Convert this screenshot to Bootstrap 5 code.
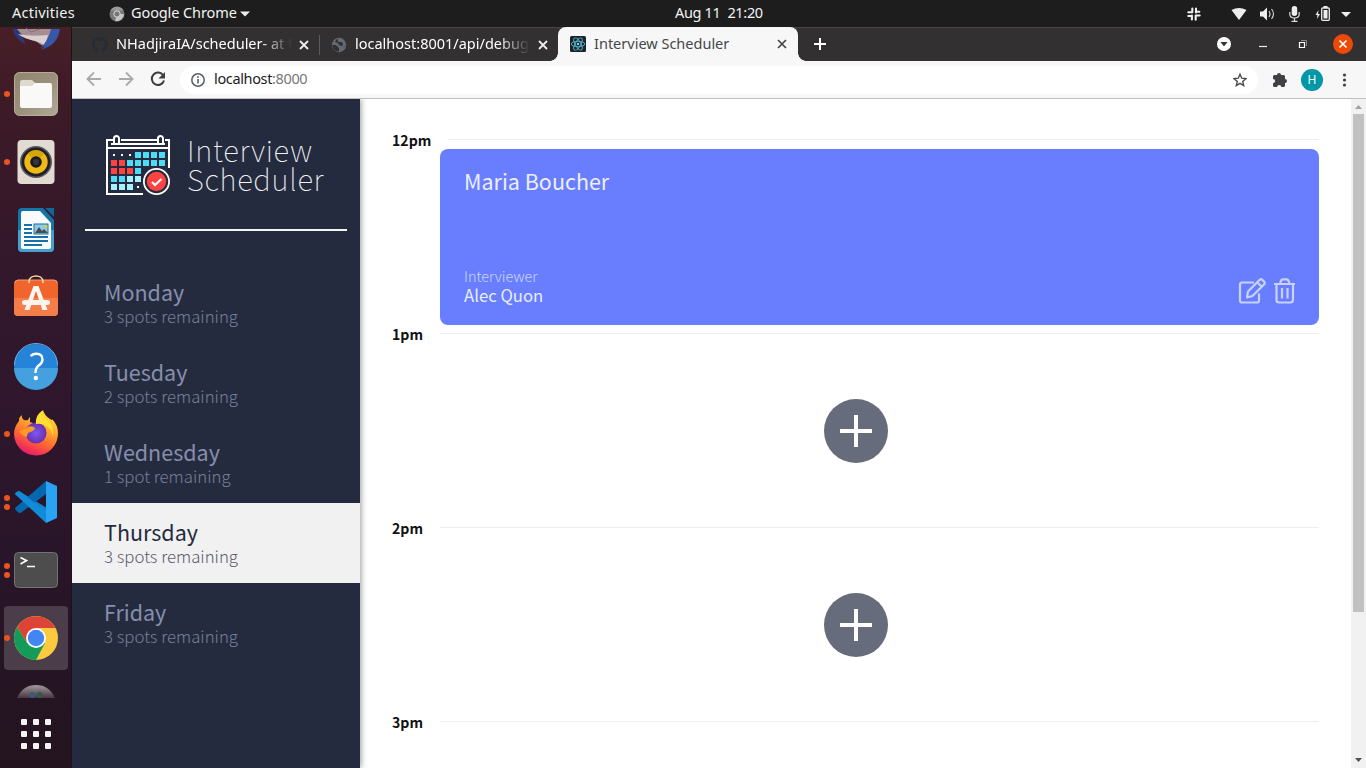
<!DOCTYPE html>
<html lang="en">
<head>
<meta charset="utf-8">
<title>Interview Scheduler</title>
<link href="https://cdn.jsdelivr.net/npm/bootstrap@5.3.0/dist/css/bootstrap.min.css" rel="stylesheet">
<style>
html,body{height:768px;overflow:hidden}
body{font-family:"Noto Sans","Open Sans",sans-serif;font-size:14.5px;line-height:20px;color:#fff;width:1366px}
svg{display:block;flex:none}
.t{white-space:nowrap}
.topbar{height:27px;background:#1d1d1d;color:#f2f2f2}
.topbar .t,.tabstrip .t,.toolbar .t{padding-bottom:4px}
.dock{width:72px;background:linear-gradient(#471f27 0,#3d1a27 80px,#34182b 220px,#2e162c 400px,#281528 550px,#23141f 741px);box-shadow:inset -1px 0 #1c1019}
.slot{height:68px}
.slot-top{height:33px}
.slot-end{height:26px}
.dots{left:4px;top:0;bottom:0;gap:3px}
.dots i{width:6px;height:6px;border-radius:50%;background:#e95420}
.active-app{width:64px;height:64px;background:#4b3d49;border-radius:4px}
.apps{display:grid;grid-template-columns:repeat(3,6px);gap:6px;margin:21px auto 0;width:30px}
.apps i{height:6px;border-radius:1px;background:#f4f2f2}
.tabstrip{height:34px;background:#333031;border-top:1px solid #494647}
.tab-a{width:248px}
.tab-b{width:238px}
.tab-on{width:240px;height:34px;background:#f7f7f7;border-radius:8px 8px 0 0;color:#45484b;margin-top:-1px}
.tab-on:before,.tab-on:after{content:"";position:absolute;bottom:0;width:8px;height:8px}
.tab-on:before{left:-8px;background:radial-gradient(circle at 0 0,transparent 7.5px,#f7f7f7 8px)}
.tab-on:after{right:-8px;background:radial-gradient(circle at 100% 0,transparent 7.5px,#f7f7f7 8px)}
.fade-end{-webkit-mask-image:linear-gradient(90deg,#000 calc(100% - 32px),transparent);overflow:hidden}
.toolbar{height:38px;background:#f7f7f7;border-bottom:1px solid #bfbfbf}
.omni{height:28px;width:1078px;border-radius:14px;background:#fff;color:#1c1c1e}
.avatar-h{width:22px;height:22px;border-radius:50%;background:#0097a7;color:#fff;font-size:12px;line-height:12px}
.ssp{font-family:"Noto Sans CJK SC",sans-serif}
.side{width:288px;background:#252b3e;box-shadow:1px 0 6px rgba(0,0,0,.4);z-index:1}
.brand{height:130px;padding:36px 0 0 34px}
.brand-name{font-weight:100;font-size:29.4px;line-height:29px;letter-spacing:.7px;color:#f1f3f7;margin:0 0 0 17px}
.rule{height:2px;width:262px;margin:0 13px 32px;background:#f5f5f7}
.day{height:80px;padding:15px 32px;color:#858fad}
.day-name{font-size:21.5px;line-height:28px}
.day-sub{font-size:16.8px;line-height:20px;font-weight:300;color:#76809b}
.day.on{background:#f1f1f1;color:#252b3e}
.day.on .day-sub{color:#5a5a70}
.main-area{width:991px;background:#fff;padding:32px 32px 0}
.hour{height:194px}
.hour-head{height:18px;line-height:18px;color:#111}
.hour-name{width:48px;font-weight:700;font-size:14.1px}
.hour-line{height:1px;background:#eee;margin-top:8px}
.appt{height:176px;background:#687eff;border-radius:8px;margin:0 0 0 48px;padding:17px 24px 20px}
.who{font-size:21.5px;line-height:30px;color:#eceffa}
.lab{font-size:14.4px;line-height:18px;font-weight:300;color:#ccd5ff}
.int{font-size:16.7px;line-height:20px;color:#e9edff}
.appt svg{margin:0 -1px 1px 0}
.plus{width:64px;height:64px;border-radius:50%;background:#666c7b;margin-top:56px}
.sbar{width:15px;background:#f1f1f1}
.thumb{width:11px;height:498px;background:#c1c1c1}
</style>
</head>
<body class="d-flex flex-column">
<header class="topbar d-flex align-items-center flex-shrink-0 px-0">
  <div class="t" style="width:109px;padding-left:12px;letter-spacing:.25px">Activities</div>
  <svg width="16" height="16" viewBox="0 0 16 16"><circle cx="8" cy="8" r="7.5" fill="#777"/><path d="M8 8h7a7.5 7.5 0 0 1-9 7z" fill="#c4c4c4"/><path d="M1.500 4.500A7.500 7.500 0 0 1 14.500 4.500H8z" fill="#999"/><circle cx="8" cy="8" r="3.200" fill="#777" stroke="#ddd"/></svg>
  <div class="t" style="margin-left:6px;width:109px;letter-spacing:-.1px">Google Chrome</div>
  <svg width="10" height="6"><path d="M0 .5h10L5 5.500z" fill="#eee"/></svg>
  <div class="t" style="margin-left:425px;width:512px;white-space:pre;letter-spacing:-.33px">Aug 11  21:20</div>
  <svg width="179" height="26" viewBox="1187 0 179 26" fill="#eee">
    <g stroke="#f0f0f0" stroke-width="2.100" stroke-linecap="round" fill="none"><path d="M1192.300 7.500v3.300M1188.300 11.300h4M1196 7.500v4M1196.500 10.800h2.800M1195.700 15v3.700M1195.700 14.500h4M1191.900 14.500v4M1188.300 15h3"/></g>
    <path d="M1231.500 9q7.500-4 15 0l-7.500 10z"/>
    <path d="M1260 10.500h3l4-4v13l-4-4h-3z"/><path d="M1269 10q2 3 0 6M1271.500 8q4 5 0 10" fill="none" stroke="#ccc" stroke-width="1.200"/>
    <rect x="1291.700" y="5" width="5.500" height="10" rx="2.700"/><path d="M1289.800 11v2q0 4 4.700 4t4.700-4v-2M1294.500 17v3M1291.500 20.300h6" fill="none" stroke="#ddd" stroke-width="1.200"/>
    <path d="M1318.500 9l-3 5h2l-.5 4 3-5h-2z"/><rect x="1321.700" y="7" width="7.600" height="12.300" rx="1" fill="none" stroke="#eee" stroke-width="1.300"/><path d="M1323.500 9h4v8.500h-4zM1323.500 5h4v2h-4z"/>
    <path d="M1341 11h10l-5 5z"/>
  </svg>
</header>
<div class="d-flex flex-grow-1 overflow-hidden">
<aside class="dock d-flex flex-column flex-shrink-0">
  <div class="slot-top flex-shrink-0"><svg width="72" height="33" viewBox="0 27 72 33"><path d="M12.500 29h7l6 15q-10-4-13-15z" fill="#2e377b"/><path d="M17 29h35l-7 17q-5-1-8-4-14-4-20-13z" fill="#a58f95"/><path d="M18 34q12 3 30 1l-3 10-9-4q-12-2-18-7z" fill="#dccfd1"/><path d="M51 29h9q-2 12-10 17l-9 4 4-4-5 2q8-6 11-19z" fill="#3757a8"/><path d="M26 28l5 4 9-3" stroke="#84727b" fill="none"/></svg></div>
  <div class="slot position-relative"><span class="dots position-absolute d-flex flex-column justify-content-center"><i></i></span><svg class="mx-auto" width="72" height="68" viewBox="0 60 72 68"><defs><linearGradient id="fg" x2="1" y2="1"><stop stop-color="#8f8570"/><stop offset=".5" stop-color="#9a907c"/><stop offset="1" stop-color="#b1a997"/></linearGradient></defs><rect x="14.500" y="72.500" width="43" height="43" rx="5" fill="url(#fg)" stroke="#b5ad9a"/><path d="M20 82q0-2 2-2h10l3 3v6H20z" fill="#dfd9cd"/><path d="M20 86h12l3-3h15q2 0 2 2v21q0 2-2 2H22q-2 0-2-2z" fill="#f9f9f8"/></svg></div>
  <div class="slot position-relative"><span class="dots position-absolute d-flex flex-column justify-content-center"><i></i></span><svg width="72" height="68" viewBox="0 128 72 68"><rect x="17.500" y="140" width="37" height="44" rx="4" fill="#e1dbd1"/><circle cx="36" cy="162" r="16" fill="#5c5962"/><circle cx="36" cy="162" r="14.500" fill="#202029"/><circle cx="36" cy="162" r="11.700" fill="#f1b916"/><path d="M36 162l-8.300-8.300a11.700 11.700 0 0 1 16.600 0z" fill="#d9a40a"/><circle cx="36" cy="162" r="5.800" fill="#1a1b20"/><circle cx="36" cy="162" r="3" fill="#35363b"/></svg></div>
  <div class="slot"><svg width="72" height="68" viewBox="0 196 72 68"><path d="M22 208h21l11 12v28q0 4-4 4H22q-4 0-4-4v-36q0-4 4-4z" fill="#1675a8"/><path d="M18 230h36v18q0 4-4 4H22q-4 0-4-4z" fill="#459fd0"/><path d="M45 208h9v9z" fill="#10659b"/><path d="M23 211h17l11 12v24q0 2-2 2H23q-2 0-2-2v-34q0-2 2-2z" fill="#f9fafb"/><path d="M24 225h8M24 229h8M24 233h8M24 237h24M24 241h24M24 245h18" stroke="#176fa8" stroke-width="1.800"/><rect x="34" y="224" width="14" height="10" fill="#8fcbe8" stroke="#176fa8"/><path d="M35 233l4-6 3 4 2-2 4 4z" fill="#4c4b47"/><circle cx="46" cy="226.500" r="1.500" fill="#f5c518"/></svg></div>
  <div class="slot"><svg width="72" height="68" viewBox="0 264 72 68"><rect x="14" y="280" width="44" height="36" rx="4" fill="#f1642b"/><path d="M14 298h44v14q0 4-4 4H18q-4 0-4-4z" fill="#f37e49"/><path d="M15 283q0-3 3-3h36q3 0 3 3" stroke="#f49d74" fill="none"/><path d="M29 283v-1c0-8 14-8 14 0v1" fill="none" stroke="#f0d7a5" stroke-width="1.700"/><path d="M33.500 286h5l9 24h-5L36 291l-6.500 19h-5z" fill="#fff7f1"/><rect x="22" y="300" width="28" height="5" rx="2.500" fill="#fff3ec"/></svg></div>
  <div class="slot"><svg width="72" height="68" viewBox="0 332 72 68"><circle cx="36" cy="366" r="22" fill="#2584d7"/><path d="M14 368h44a22 22 0 0 1-44 0z" fill="#45a0df"/><path d="M14.500 365a21.500 21.500 0 0 1 43 0" fill="none" stroke="#69aee8"/><path d="M30.500 356q3-2.300 6-2.200 6 .3 6 5.600 0 3.500-3.700 6-3.300 2.600-3.300 7v.5" fill="none" stroke="#fff" stroke-width="2.400"/><circle cx="35.800" cy="378" r="2.200" fill="#fff"/></svg></div>
  <div class="slot position-relative"><span class="dots position-absolute d-flex flex-column justify-content-center"><i></i></span><svg width="72" height="68" viewBox="0 400 72 68"><defs><linearGradient id="ff" x1=".8" y1="0" x2=".35" y2="1"><stop stop-color="#ffe83c"/><stop offset=".35" stop-color="#ffae2b"/><stop offset=".7" stop-color="#ff5f35"/><stop offset="1" stop-color="#e8186c"/></linearGradient><radialGradient id="fp"><stop stop-color="#7a59f4"/><stop offset="1" stop-color="#6b2fae"/></radialGradient></defs><path d="M14 434q0-7 5-13 0-4 2.500-6 .5 4 2.500 5 2 .500 4 0 1-2 2-3v5l6 2q2-10 7-14 1 5 7 9 3 2 2 0 6 6 6 14a22 22 0 1 1-44 1z" fill="url(#ff)"/><circle cx="36" cy="433" r="10.500" fill="url(#fp)"/><path d="M19 431q6-1 9-4 4-2 7 1-1 3-5 4-3 1-3 5-5-1-8-6z" fill="#ff9b24"/><path d="M36 424q-1-9 6-13 0 5 7 10 5 5 4 15-2-8-7-10-4-3-10-2z" fill="#ffdf35"/></svg></div>
  <div class="slot position-relative"><span class="dots position-absolute d-flex flex-column justify-content-center"><i></i><i></i></span><svg width="72" height="68" viewBox="0 468 72 68"><path d="M19 491q-4 1-4 3l32 28V508z" fill="#0b83d2"/><path d="M46 481L15 508q0 2 4 5 2 0 3-1l24-18z" fill="#0567ad"/><path d="M19 491l-4 3 31 29v-12z" fill="#128bd8"/><path d="M46 481l11 5v32l-11 5z" fill="#29a4f2"/></svg></div>
  <div class="slot position-relative"><span class="dots position-absolute d-flex flex-column justify-content-center"><i></i><i></i></span><svg width="72" height="68" viewBox="0 536 72 68"><rect x="14.500" y="552.500" width="43" height="35" rx="4" fill="#4d4d4d" stroke="#747274"/><path d="M20.500 557.500l6 3-6 3.500" fill="none" stroke="#fff" stroke-width="1.700"/><path d="M27 566.500h8" stroke="#fff" stroke-width="1.500"/></svg></div>
  <div class="slot position-relative d-flex align-items-center justify-content-center"><div class="active-app d-flex align-items-center justify-content-center"><svg width="46" height="46" viewBox="-23 -23 46 46"><circle r="22" fill="#fbca3e"/><path d="M-19-11A22 22 0 0 1 19.500-10H0L-9 5z" fill="#db4437"/><path d="M-19-11A22 22 0 0 0 0 22L9 5-9 5z" fill="#159b59"/><circle r="10" fill="#fff"/><circle r="8.200" fill="#4285f4"/></svg></div><span class="dots position-absolute d-flex flex-column justify-content-center"><i></i></span></div>
  <div class="slot-end flex-shrink-0"><svg width="72" height="26" viewBox="0 672 72 26"><defs><linearGradient id="tr" x2="0" y2="1"><stop stop-color="#a19aa0"/><stop offset="1" stop-color="#49363f"/></linearGradient></defs><path d="M17 698q6-13 19-13t19 13z" fill="url(#tr)"/><circle cx="32.500" cy="695" r="3" fill="#3b5a76"/><circle cx="39.500" cy="695" r="3" fill="#34584e"/></svg></div>
  <div class="apps"><i></i><i></i><i></i><i></i><i></i><i></i><i></i><i></i><i></i></div>
</aside>
<div class="d-flex flex-column flex-grow-1">
  <div class="tabstrip d-flex flex-shrink-0">
    <div class="tab-a d-flex align-items-center" style="padding-left:20px">
      <svg width="16" height="16" viewBox="0 0 16 16"><path fill="#252c35" d="M8 0C3.580 0 0 3.580 0 8c0 3.540 2.290 6.530 5.470 7.590.4.070.55-.17.55-.38v-1.490c-2.010.37-2.530-.49-2.690-.94-.36-.92-.85-1.230-1.130-1.380-.28-.15-.68-.52-.01-.53.63-.01 1.080.58 1.230.82.72 1.210 1.870.87 2.330.66.07-.52.28-.87.510-1.070-1.780-.2-3.640-.89-3.640-3.950 0-.87.310-1.590.82-2.150-.08-.2-.36-1.020.08-2.120 0 0 .67-.21 2.200.82a7.500 7.500 0 0 1 4 0c1.530-1.040 2.200-.82 2.200-.82.44 1.100.16 1.920.08 2.120.51.56.82 1.270.82 2.150 0 3.070-1.870 3.750-3.650 3.950.29.25.54.73.54 1.480v2.200c0 .21.150.46.55.38A8 8 0 0 0 16 8c0-4.420-3.580-8-8-8z"/></svg>
      <div class="t fade-end" style="width:176px;margin-left:8px">NHadjiraIA/scheduler- at f</div>
      <svg width="10" height="10" viewBox="0 0 10 10" style="margin-left:7px"><path d="M1 1l8 8M9 1L1 9" stroke="#eee" stroke-width="1.800"/></svg>
      <div class="ms-auto" style="width:1px;height:20px;background:#5e5b5c"></div>
    </div>
    <div class="tab-b d-flex align-items-center" style="padding-left:11px">
      <svg width="16" height="16" viewBox="0 0 16 16"><circle cx="8" cy="8" r="7.200" fill="#656970"/><path d="M1 8h4l3 3v3.500q-6 0-7-6.500zM7 1.500q-1 3 1 3.500h3q2 3 0 4l-3-1-1-2-3-1q1-3 3-3.500zM12 11q2-1 3-3" fill="#333031"/></svg>
      <div class="t fade-end" style="width:175px;margin-left:8px">localhost:8001/api/debug</div>
      <svg width="10" height="10" viewBox="0 0 10 10" style="margin-left:8px"><path d="M1 1l8 8M9 1L1 9" stroke="#eee" stroke-width="1.800"/></svg>
    </div>
    <div class="tab-on position-relative d-flex align-items-center" style="padding-left:12px">
      <svg width="16" height="16" viewBox="-8 -8 16 16"><rect x="-8" y="-8" width="16" height="16" rx="1.500" fill="#20232a"/><g fill="none" stroke="#53b8d0" stroke-width=".9"><ellipse rx="6.800" ry="2.700"/><ellipse rx="6.800" ry="2.700" transform="rotate(60)"/><ellipse rx="6.800" ry="2.700" transform="rotate(120)"/></g><circle r="1.200" fill="#61dafb"/></svg>
      <div class="t" style="width:175px;margin-left:8px;padding-bottom:3px">Interview Scheduler</div>
      <svg width="10" height="10" viewBox="0 0 10 10" style="margin-left:8px"><path d="M1 1l8 8M9 1L1 9" stroke="#444" stroke-width="1.700"/></svg>
    </div>
    <svg width="568" height="33" viewBox="798 28 568 33"><path d="M820 38v12M814 44h12" stroke="#fff" stroke-width="2"/><circle cx="1224" cy="44" r="7" fill="#fff"/><path d="M1220.500 42h7l-3.500 4.500z" fill="#333"/><path d="M1259 46.500h8" stroke="#eee" stroke-width="1.200"/><path d="M1299.500 42.500h5v5h-5z" fill="none" stroke="#fff" stroke-width="1.200"/><path d="M1301 40.500h5.500v5.500" fill="none" stroke="#888"/><circle cx="1343" cy="44" r="10" fill="#ee4a07"/><path d="M1339.500 40.500l7 7M1346.500 40.500l-7 7" stroke="#fff" stroke-width="1.700"/></svg>
  </div>
  <div class="toolbar d-flex flex-shrink-0 align-items-center">
    <svg width="108" height="37" viewBox="72 61 108 37" fill="none"><path d="M101 79H88M94 72.500L87.500 79l6.500 6.500M119 79h13M126 72.500l6.500 6.500-6.500 6.500" stroke="#a9a9a9" stroke-width="1.800"/><path d="M163.300 75.500a6.200 6.200 0 1 0 .7 5" stroke="#3c3e41" stroke-width="2"/><path d="M165 72v6.500h-6.500z" fill="#3c3e41"/></svg>
    <div class="omni d-flex align-items-center">
      <svg style="margin-left:11px" width="14" height="14" viewBox="0 0 14 14"><circle cx="7" cy="7" r="6.200" fill="none" stroke="#5a5d61" stroke-width="1.500"/><path d="M6.200 6h1.600v4.500H6.200zM6.200 3.300h1.600v1.600H6.200z" fill="#5a5d61"/></svg>
      <div class="t" style="margin-left:9px;letter-spacing:-.36px">localhost<span style="color:#777">:8000</span></div>
      <svg class="ms-auto" style="margin-right:11px" width="14" height="14" viewBox="0 0 14 14"><path d="M7 1.200l1.700 4 4.300.4-3.300 2.800 1 4.200L7 10.300l-3.700 2.300 1-4.200L1 5.600l4.300-.4z" fill="none" stroke="#4a4d50" stroke-width="1.400"/></svg>
    </div>
    <svg style="margin-left:14px" width="16" height="16" viewBox="0 0 16 16"><path d="M1 4.500q0-1.500 1.500-1.500H5a2 2 0 1 1 4 0h2.500Q13 3 13 4.500V7a2 2 0 0 1 0 4v2.500q0 1.500-1.500 1.500H9.300a2.100 2.100 0 0 0-4.200 0H2.500Q1 15 1 13.500v-2.300a2.100 2.100 0 0 0 0-4.200z" fill="#3f4144"/></svg>
    <div class="avatar-h d-flex align-items-center justify-content-center" style="margin-left:13px">H</div>
    <svg style="margin-left:19px" width="6" height="14" viewBox="0 0 6 14" fill="#3f4144"><circle cx="2.500" cy="2" r="1.600"/><circle cx="2.500" cy="7" r="1.600"/><circle cx="2.500" cy="12" r="1.600"/></svg>
  </div>
  <div class="d-flex flex-grow-1 overflow-hidden">
    <nav class="side position-relative flex-shrink-0 ssp">
      <div class="brand d-flex align-items-start">
        <svg width="64" height="61" viewBox="106 135 64 61"><g fill="none" stroke="#fff" stroke-width="2"><path d="M143 194H107V140h7M121 140h37M165 140h4v28M107 148h62M111 144h54"/><path d="M114 143v-4.500a2.500 2.500 0 0 1 5 0v4.500M158 143v-4.500a2.500 2.500 0 0 1 5 0v4.500"/></g><g fill="#4fdaf8"><path d="M135 152h6v6h-6zM143 152h6v6h-6zM151 152h6v6h-6zM159 152h6v6h-6zM127 160h6v6h-6zM135 160h6v6h-6zM143 160h6v6h-6zM151 160h6v6h-6zM159 160h6v6h-6zM135 168h6v6h-6zM111 176h6v6h-6zM119 176h6v6h-6z"/><path fill="#a5f1ff" d="M127 176h6v6h-6zM135 176h6v6h-6zM111 184h6v6h-6zM119 184h6v6h-6zM127 184h6v6h-6z"/></g><path fill="#ff4242" d="M111 160h6v6h-6zM119 160h6v6h-6zM111 168h6v6h-6zM119 168h6v6h-6zM127 168h6v6h-6z"/><path d="M113 154h2v2h-2zM121 154h2v2h-2zM129 154h2v2h-2zM137 186h2v2h-2z" fill="#fff"/><circle cx="156.500" cy="181.500" r="13.500" fill="#fff"/><circle cx="156.500" cy="181.500" r="11.700" fill="#252b3e"/><circle cx="156.500" cy="181.500" r="9.700" fill="#ff4242"/><path d="M152 182l3 3 6.500-6" fill="none" stroke="#fff" stroke-width="2.200"/></svg>
        <div class="brand-name t"><div>Interview</div><div>Scheduler</div></div>
      </div>
      <div class="rule"></div>
      <div class="day"><div class="day-name">Monday</div><div class="day-sub">3 spots remaining</div></div>
      <div class="day"><div class="day-name">Tuesday</div><div class="day-sub">2 spots remaining</div></div>
      <div class="day"><div class="day-name">Wednesday</div><div class="day-sub">1 spot remaining</div></div>
      <div class="day on"><div class="day-name">Thursday</div><div class="day-sub">3 spots remaining</div></div>
      <div class="day"><div class="day-name">Friday</div><div class="day-sub">3 spots remaining</div></div>
    </nav>
    <main class="main-area ssp flex-shrink-0">
      <section class="hour"><div class="hour-head d-flex"><div class="hour-name t" style="width:56px">12pm</div><div class="hour-line flex-grow-1"></div></div>
        <div class="appt d-flex flex-column"><div class="who t"><span>Maria Boucher</span></div>
          <div class="mt-auto d-flex justify-content-between align-items-end"><div><div class="lab t">Interviewer</div><div class="int t">Alec Quon</div></div>
          <svg width="58" height="26" viewBox="1238 278 58 26" fill="none" stroke="#c8d2ff" stroke-width="2.200" stroke-linejoin="round"><path d="M1254 282.500h-12q-2 0-2 2v16q0 2 2 2h15q2 0 2-2v-7"/><path d="M1247 297.500l1-6 11.500-11.500q1.500-1.500 3 0l1.500 1.500q1.500 1.500 0 3l-11.500 11.500z M1257.500 282.500l4.500 4.500"/><path d="M1274 284h21M1276.500 284.500v15.500q0 2.500 2.500 2.500h11.500q2.500 0 2.500-2.500v-15.500M1280 283l1.500-3q.5-.7 1.500-.7h3.500q1 0 1.500.7l1.500 3M1282 288v10.500M1287.500 288v10.500"/></svg></div></div>
      </section>
      <section class="hour"><div class="hour-head d-flex"><div class="hour-name t">1pm</div><div class="hour-line flex-grow-1"></div></div><div class="plus mx-auto d-flex align-items-center justify-content-center"><svg width="32" height="32"><path d="M14 0h4v14h14v4H18v14h-4V18H0v-4h14z" fill="#fff"/></svg></div></section>
      <section class="hour"><div class="hour-head d-flex"><div class="hour-name t">2pm</div><div class="hour-line flex-grow-1"></div></div><div class="plus mx-auto d-flex align-items-center justify-content-center"><svg width="32" height="32"><path d="M14 0h4v14h14v4H18v14h-4V18H0v-4h14z" fill="#fff"/></svg></div></section>
      <section class="hour"><div class="hour-head d-flex"><div class="hour-name t">3pm</div><div class="hour-line flex-grow-1"></div></div></section>
    </main>
    <div class="sbar d-flex flex-column align-items-center flex-shrink-0"><svg width="15" height="15"><path d="M4 10h7L7.500 6z" fill="#a0a0a0"/></svg><div class="thumb"></div><svg class="mt-auto" width="15" height="16"><path d="M4 6h7L7.500 10z" fill="#505050"/></svg></div>
  </div>
</div>
</div>
<script src="https://cdn.jsdelivr.net/npm/bootstrap@5.3.0/dist/js/bootstrap.bundle.min.js"></script>
</body>
</html>
